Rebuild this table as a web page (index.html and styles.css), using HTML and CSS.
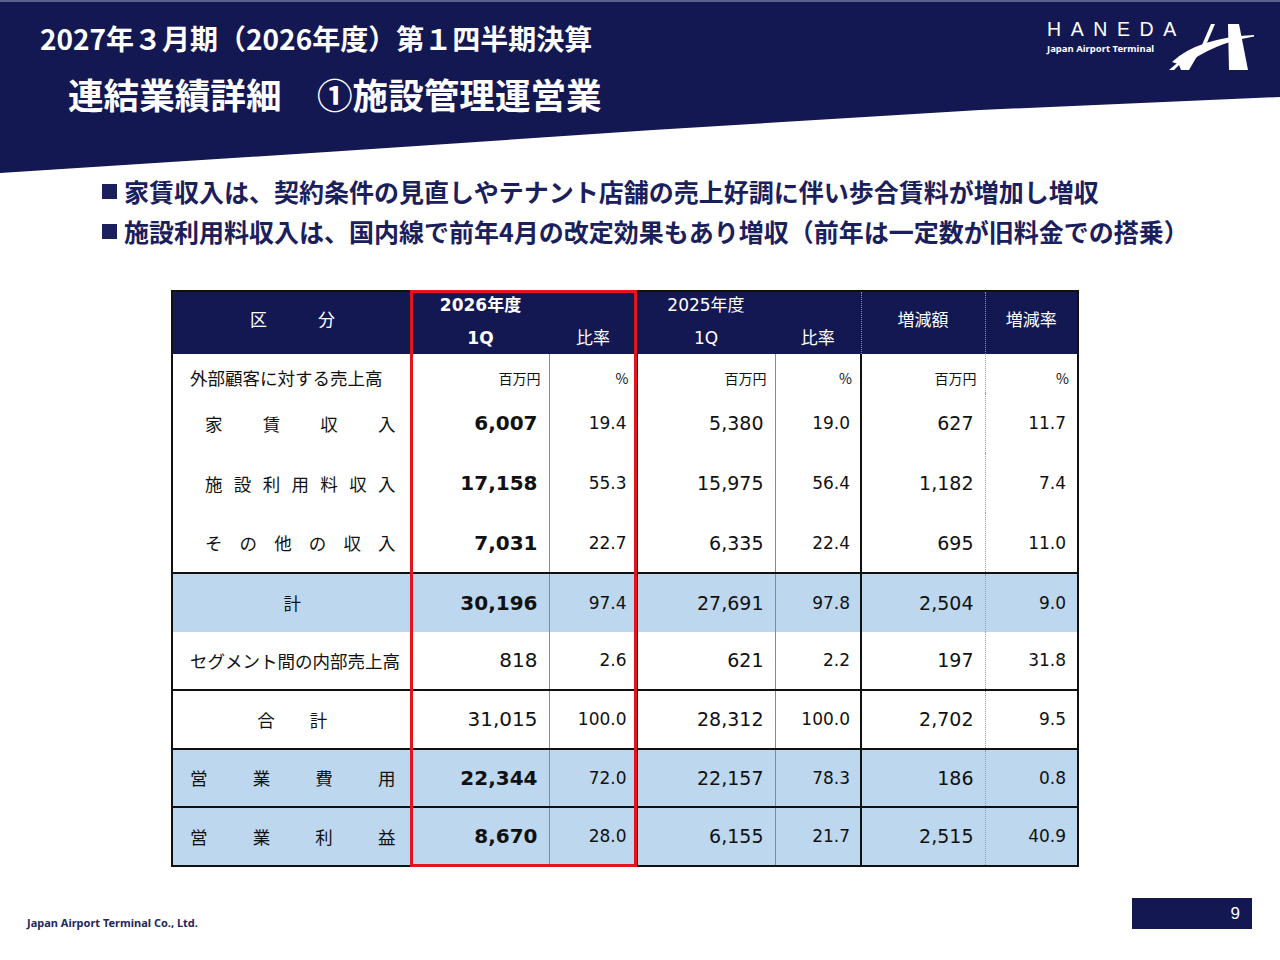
FILE: index.html
```html
<!DOCTYPE html>
<html lang="ja">
<head>
<meta charset="utf-8">
<title>連結業績詳細 ①施設管理運営業</title>
<link rel="stylesheet" href="styles.css">
</head>
<body>
<div class="slide">
  <header class="banner">
    <div class="titles">
      <h1 class="t1">2027年３月期（2026年度）第１四半期決算</h1>
      <h2 class="t2">連結業績詳細　①施設管理運営業</h2>
    </div>
    <div class="logo">
      <div class="logo-text">
        <div class="haneda">HANEDA</div>
        <div class="jat">Japan Airport Terminal</div>
      </div>
      <svg class="mark" width="86" height="52" viewBox="0 0 86 52">
        <path d="M42,4 L46,4 L37,25 L33,25 Z" fill="#fff"/>
        <path d="M20,33 L34,26 L20,50 L12,50 L10,45 L5,50 L0,50 Z" fill="#fff"/>
        <path d="M3,42 Q28,18 85,15 L85,16.5 Q44,23 15,46 Z" fill="#fff"/>
        <path d="M59,4 L70,4 L79,50 L60,50 Z" fill="#fff"/>
      </svg>
    </div>
  </header>

  <ul class="points">
    <li><span class="sq"></span>家賃収入は、契約条件の見直しやテナント店舗の売上好調に伴い歩合賃料が増加し増収</li>
    <li><span class="sq"></span>施設利用料収入は、国内線で前年4月の改定効果もあり増収（前年は一定数が旧料金での搭乗）</li>
  </ul>

  <div class="table-wrap">
    <table class="fin">
      <colgroup>
        <col class="w-lab"><col class="w-a26"><col class="w-r26"><col class="w-a25"><col class="w-r25"><col class="w-d"><col class="w-dr">
      </colgroup>
      <thead>
        <tr>
          <th class="h-lab">区　　　分</th>
          <th><div class="l1 b">2026年度</div><div class="l2 b">1Q</div></th>
          <th><div class="l1"></div><div class="l2">比率</div></th>
          <th><div class="l1">2025年度</div><div class="l2">1Q</div></th>
          <th><div class="l1"></div><div class="l2">比率</div></th>
          <th class="h-sep">増減額</th>
          <th class="h-sep">増減率</th>
        </tr>
      </thead>
      <tbody>
        <tr class="r-unit">
          <td class="c-lab"><span class="lab-pad">外部顧客に対する売上高</span></td>
          <td class="c-a26 unit">百万円</td>
          <td class="c-r26 unit">%</td>
          <td class="c-a25 unit">百万円</td>
          <td class="c-r25 unit">%</td>
          <td class="c-d unit">百万円</td>
          <td class="c-dr unit">%</td>
        </tr>
        <tr class="r-data">
          <td class="c-lab"><div class="dist in"><span>家</span><span>賃</span><span>収</span><span>入</span></div></td>
          <td class="c-a26 num n20 b">6,007</td>
          <td class="c-r26 num n17">19.4</td>
          <td class="c-a25 num n19">5,380</td>
          <td class="c-r25 num n17">19.0</td>
          <td class="c-d num n19">627</td>
          <td class="c-dr num n17">11.7</td>
        </tr>
        <tr class="r-data">
          <td class="c-lab"><div class="dist in"><span>施</span><span>設</span><span>利</span><span>用</span><span>料</span><span>収</span><span>入</span></div></td>
          <td class="c-a26 num n20 b">17,158</td>
          <td class="c-r26 num n17">55.3</td>
          <td class="c-a25 num n19">15,975</td>
          <td class="c-r25 num n17">56.4</td>
          <td class="c-d num n19">1,182</td>
          <td class="c-dr num n17">7.4</td>
        </tr>
        <tr class="r-data">
          <td class="c-lab"><div class="dist in"><span>そ</span><span>の</span><span>他</span><span>の</span><span>収</span><span>入</span></div></td>
          <td class="c-a26 num n20 b">7,031</td>
          <td class="c-r26 num n17">22.7</td>
          <td class="c-a25 num n19">6,335</td>
          <td class="c-r25 num n17">22.4</td>
          <td class="c-d num n19">695</td>
          <td class="c-dr num n17">11.0</td>
        </tr>
        <tr class="r-row blue ruled">
          <td class="c-lab center">計</td>
          <td class="c-a26 num n20 b">30,196</td>
          <td class="c-r26 num n17">97.4</td>
          <td class="c-a25 num n19">27,691</td>
          <td class="c-r25 num n17">97.8</td>
          <td class="c-d num n19">2,504</td>
          <td class="c-dr num n17">9.0</td>
        </tr>
        <tr class="r-row">
          <td class="c-lab"><span class="lab-pad">セグメント間の内部売上高</span></td>
          <td class="c-a26 num n20">818</td>
          <td class="c-r26 num n17">2.6</td>
          <td class="c-a25 num n19">621</td>
          <td class="c-r25 num n17">2.2</td>
          <td class="c-d num n19">197</td>
          <td class="c-dr num n17">31.8</td>
        </tr>
        <tr class="r-row ruled">
          <td class="c-lab center">合　　計</td>
          <td class="c-a26 num n20">31,015</td>
          <td class="c-r26 num n17">100.0</td>
          <td class="c-a25 num n19">28,312</td>
          <td class="c-r25 num n17">100.0</td>
          <td class="c-d num n19">2,702</td>
          <td class="c-dr num n17">9.5</td>
        </tr>
        <tr class="r-row blue ruled">
          <td class="c-lab"><div class="dist out"><span>営</span><span>業</span><span>費</span><span>用</span></div></td>
          <td class="c-a26 num n20 b">22,344</td>
          <td class="c-r26 num n17">72.0</td>
          <td class="c-a25 num n19">22,157</td>
          <td class="c-r25 num n17">78.3</td>
          <td class="c-d num n19">186</td>
          <td class="c-dr num n17">0.8</td>
        </tr>
        <tr class="r-row blue ruled">
          <td class="c-lab"><div class="dist out"><span>営</span><span>業</span><span>利</span><span>益</span></div></td>
          <td class="c-a26 num n20 b">8,670</td>
          <td class="c-r26 num n17">28.0</td>
          <td class="c-a25 num n19">6,155</td>
          <td class="c-r25 num n17">21.7</td>
          <td class="c-d num n19">2,515</td>
          <td class="c-dr num n17">40.9</td>
        </tr>
      </tbody>
    </table>
    <div class="highlight"></div>
  </div>

  <footer class="foot">
    <div class="company">Japan Airport Terminal Co., Ltd.</div>
    <div class="page">9</div>
  </footer>
</div>
</body>
</html>
```

FILE: styles.css
```css
* { box-sizing: border-box; }

html, body {
  margin: 0;
  padding: 0;
  background: #ffffff;
}

.slide {
  width: 1280px;
  height: 960px;
  position: relative;
  overflow: hidden;
  font-family: "Noto Sans CJK JP", "Noto Sans", sans-serif;
  color: #111;
}

/* ---------- banner ---------- */
.banner {
  height: 175px;
  background: #141852;
  border-top: 2px solid #5c608e;
  clip-path: polygon(0 0, 100% 0, 100% 97px, 980px 110px, 653px 130px, 327px 152px, 0 173px);
  display: flex;
  justify-content: space-between;
  align-items: flex-start;
  padding: 0 25px 0 40px;
}

.titles {
  color: #fff;
}

.t1 {
  margin: 16px 0 0 0;
  font-size: 28px;
  line-height: 40px;
  font-weight: 700;
  letter-spacing: 0;
}

.t2 {
  margin: 11px 0 0 28px;
  font-size: 35.6px;
  line-height: 50px;
  font-weight: 700;
}

.logo {
  display: flex;
  align-items: flex-start;
  margin-top: 15px;
  color: #fff;
}

.logo-text {
  display: flex;
  flex-direction: column;
  width: 130px;
}

.haneda {
  font-family: "Liberation Sans", "Noto Sans", sans-serif;
  font-size: 19.5px;
  line-height: 24px;
  letter-spacing: 9.6px;
  font-weight: 400;
}

.jat {
  font-family: "Noto Sans", "Liberation Sans", sans-serif;
  font-size: 9.5px;
  line-height: 14px;
  font-weight: 700;
  margin-top: 1px;
  letter-spacing: 0;
}

.mark {
  display: block;
  margin-left: -8px;
  margin-top: 3px;
}

/* ---------- bullets ---------- */
.points {
  list-style: none;
  margin: -4px 0 0 0;
  padding: 0 0 0 102px;
  color: #1b205c;
  font-size: 25px;
  line-height: 40px;
  font-weight: 700;
}

.points li {
  display: flex;
  align-items: center;
  white-space: nowrap;
}

.sq {
  display: inline-block;
  width: 15px;
  height: 15px;
  background: #1b205c;
  margin-right: 7px;
  flex: 0 0 auto;
}

/* ---------- table ---------- */
.table-wrap {
  position: relative;
  margin: 39px 0 0 171px;
  width: 906px;
}

.fin {
  width: 906px;
  border-collapse: collapse;
  table-layout: fixed;
  border: 2px solid #111;
  font-family: "DejaVu Sans", "Noto Sans CJK JP", sans-serif;
}

.w-lab { width: 240px; }
.w-a26 { width: 137px; }
.w-r26 { width: 88px; }
.w-a25 { width: 138px; }
.w-r25 { width: 86px; }
.w-d { width: 124px; }
.w-dr { width: 93px; }

.fin th {
  background: #141852;
  color: #fff;
  font-weight: 400;
  font-size: 17px;
  height: 62px;
  padding: 0;
  text-align: center;
  vertical-align: middle;
  font-family: "DejaVu Sans", "Noto Sans CJK JP", sans-serif;
}

.fin th.h-lab {
  font-family: "Noto Sans CJK JP", sans-serif;
  padding-bottom: 10px;
}

.fin th.h-sep {
  border-left: 1px dotted #8d90b8;
  font-family: "Noto Sans CJK JP", sans-serif;
  padding-bottom: 10px;
}

.l1, .l2 {
  height: 31px;
  line-height: 31px;
}

.l1 { line-height: 27px; }

.b { font-weight: 700; }

.fin td {
  padding: 0;
  vertical-align: middle;
  color: #111;
}

.r-unit td { height: 39px; padding-top: 8px; }
.r-data td { height: 60px; }
.r-row td { height: 58.5px; }

.ruled td { border-top: 2px solid #111; }

.blue td { background: #bdd7ee; }

.c-lab {
  font-family: "Noto Sans CJK JP", sans-serif;
  font-size: 17.5px;
  border-right: 1px solid #111;
}

.lab-pad { padding-left: 17px; white-space: nowrap; }

.center { text-align: center; }

.dist {
  display: flex;
  justify-content: space-between;
}

.dist.in { padding: 0 16px 0 32px; }
.dist.out { padding: 0 16px 0 17px; }

.c-a26 { border-right: 1px solid #8a8a8a; }
.c-r26 { border-right: 1px solid #111; }
.c-a25 { border-right: 1px solid #8a8a8a; }
.c-r25 { border-right: 2px solid #111; }
.c-d { border-right: 1px dotted #9a9a9a; }

.num {
  text-align: right;
  padding-right: 11px !important;
  white-space: nowrap;
}

.c-r26.num, .c-r25.num { padding-right: 10px !important; }

.n20 { font-size: 20px; }
.n19 { font-size: 19px; }
.n17 { font-size: 17px; }

.unit {
  text-align: right;
  font-family: "Noto Sans CJK JP", sans-serif;
  font-size: 14px;
  padding-right: 8px !important;
}

.highlight {
  position: absolute;
  left: 239px;
  top: 0;
  width: 227px;
  height: 577px;
  border: 3px solid #e3141b;
  pointer-events: none;
}

/* ---------- footer ---------- */
.foot {
  display: flex;
  justify-content: space-between;
  align-items: flex-end;
  margin-top: 31px;
  padding: 0 28px 0 27px;
}

.company {
  font-family: "Noto Sans", "Liberation Sans", sans-serif;
  font-size: 11px;
  font-weight: 700;
  color: #23285a;
  line-height: 12px;
}

.page {
  width: 120px;
  height: 31px;
  background: #141852;
  color: #fff;
  font-family: "Liberation Sans", "Noto Sans", sans-serif;
  font-size: 17px;
  line-height: 31px;
  text-align: right;
  padding-right: 12px;
}
```
